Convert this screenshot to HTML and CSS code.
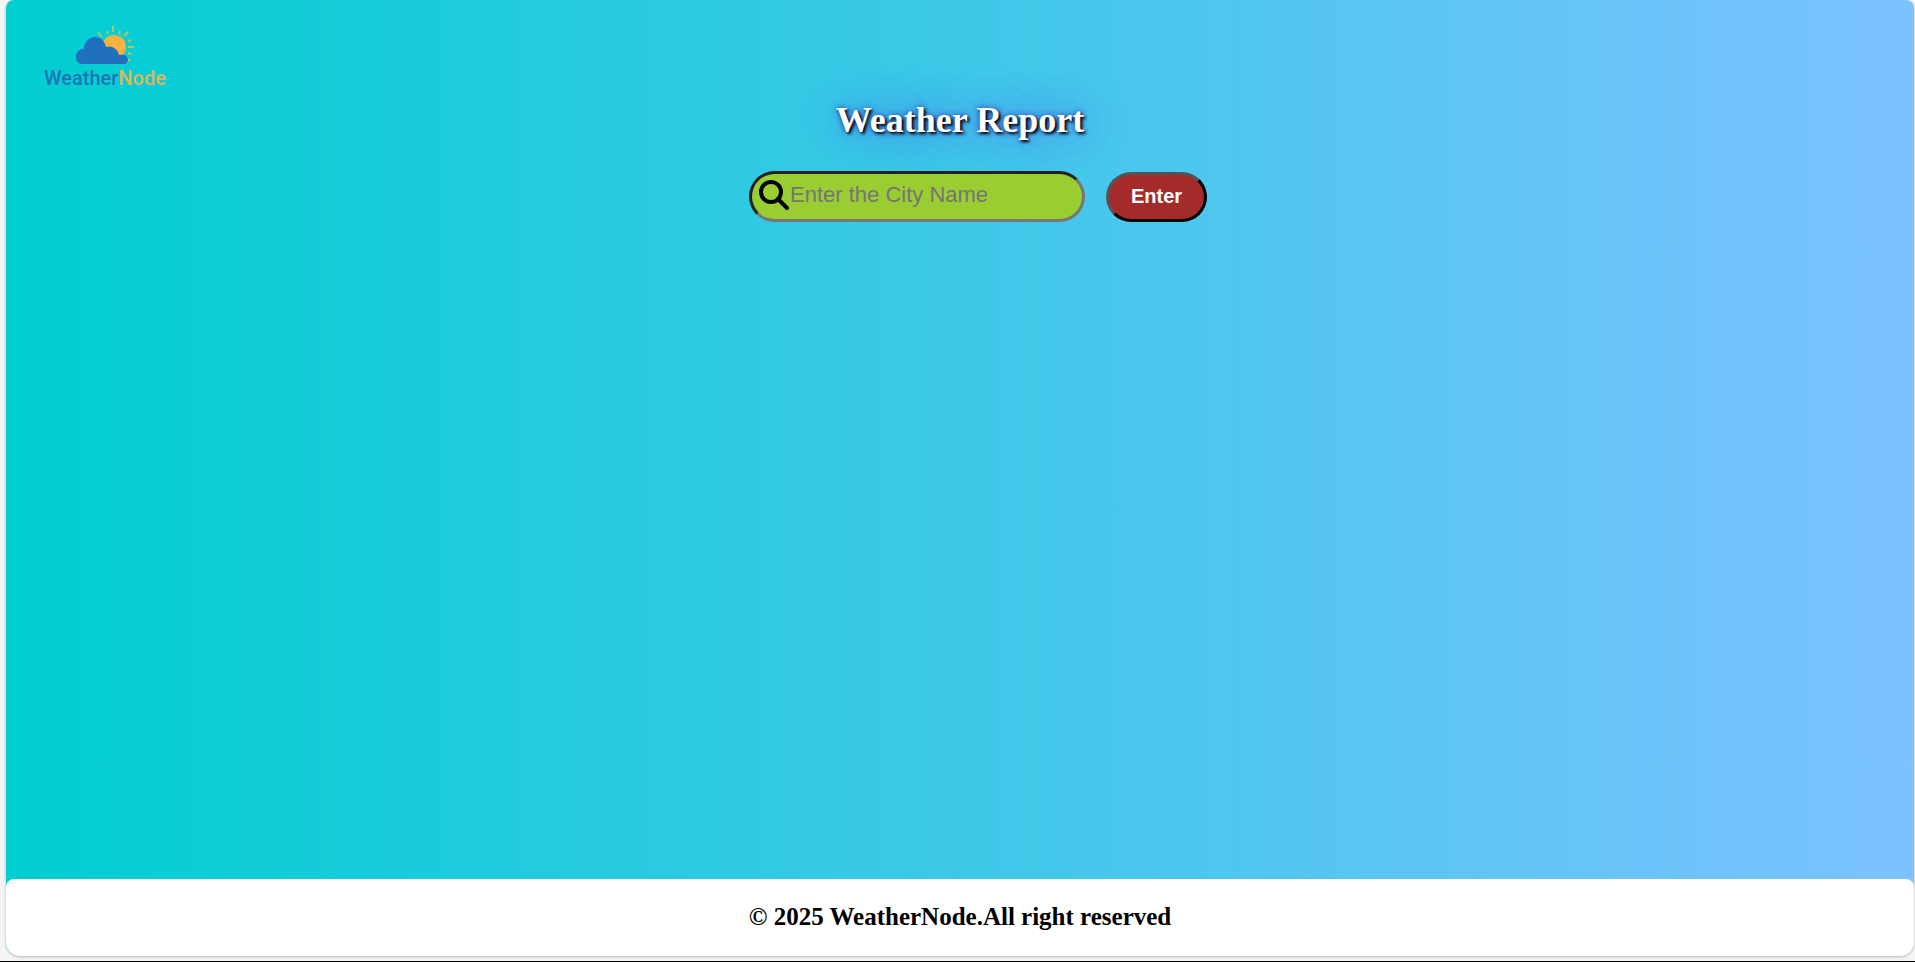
FILE: index.html
```html
<!DOCTYPE html>
<html lang="en">
<head>
<meta charset="utf-8">
<meta name="viewport" content="width=device-width, initial-scale=1">
<title>WeatherNode</title>
<link rel="stylesheet" href="styles.css">
</head>
<body>
<div class="card">
  <header class="header">
    <svg class="logo" viewBox="0 0 140 72" role="img" aria-label="WeatherNode">
      <g class="logo-rays">
        <path d="M58 10l4 5M67 9l1 3M73 4v6M80 9l-1 3M88 10l-4 4M91 18l-3 1M94 25h-6M91 32l-3-1M87 36l3 3"/>
      </g>
      <circle class="logo-sun" cx="74" cy="25" r="12"/>
      <path class="logo-cloud" d="M42 42c-4 0-6-3-6-7 0-5 3-8 8-8 0-7 5-12 11-12 5 0 10 4 11 10 6-2 12 2 13 8 5-1 9 1 9 5 0 2-2 4-4 4z"/>
      <text class="logo-text" x="4" y="63">Weather<tspan class="logo-node">Node</tspan></text>
    </svg>
  </header>
  <main class="main">
    <h1 class="title">Weather Report</h1>
    <form class="search">
      <label class="field">
        <svg class="search-icon" viewBox="0 0 32 32" aria-hidden="true"><circle cx="13" cy="13" r="10"/><path d="M20 20l9 9"/></svg>
        <input class="city" type="text" placeholder="Enter the City Name" aria-label="City name">
      </label>
      <button class="enter" type="button">Enter</button>
    </form>
  </main>
  <footer class="footer">
    <p class="copyright">© 2025 WeatherNode.All right reserved</p>
  </footer>
</div>
</body>
</html>
```
FILE: styles.css
```css
* {
  box-sizing: border-box;
}

body {
  margin: 0;
  min-height: 100vh;
  display: flex;
  padding: 0 1px 5px 6px;
  background: #f5f5f5;
  border-bottom: 1px solid #000;
  font-family: "Liberation Serif", "Times New Roman", serif;
}

.card {
  flex: 1;
  display: flex;
  flex-direction: column;
  border-radius: 8px 8px 14px 14px;
  background: linear-gradient(to right, #00ced1, #7cc2ff);
  box-shadow: 0 1px 3px rgba(0, 0, 0, 0.25);
}

.header {
  padding: 22px 0 0 34px;
}

.logo {
  display: block;
  width: 140px;
  height: 72px;
}

.logo-rays {
  fill: none;
  stroke: #b4c469;
  stroke-width: 2;
}

.logo-sun {
  fill: #fbb040;
}

.logo-cloud {
  fill: #2070bd;
}

.logo-text {
  fill: #1b75b5;
  font: 500 20px Roboto, sans-serif;
}

.logo-node {
  fill: #deb653;
}

.main {
  flex: 1;
  display: flex;
  flex-direction: column;
  align-items: center;
  gap: 30px;
  padding-top: 6px;
}

.title {
  margin: 0;
  color: #fff;
  font-size: 36px;
  line-height: 41px;
  text-shadow: 2px 2px 3px #000, 0 0 40px #5a5aff, 0 0 6px #3030b0;
}

.search {
  display: flex;
  align-items: center;
  gap: 21px;
  padding-left: 36px;
}

.field {
  position: relative;
  display: block;
}

.search-icon {
  position: absolute;
  left: 9px;
  top: 8px;
  width: 32px;
  height: 32px;
  fill: none;
  stroke: #000;
  stroke-width: 4;
  stroke-linecap: round;
}

.city {
  display: block;
  width: 336px;
  height: 51px;
  padding: 0 16px 3px 38px;
  border: 3px inset #767676;
  border-radius: 26px;
  background: #9acd32;
  font: 22px "Liberation Sans", Arial, sans-serif;
}

.city::placeholder {
  color: #757575;
}

.enter {
  width: 101px;
  height: 50px;
  padding: 0;
  border: 3px outset #000;
  border-radius: 25px;
  background: #a52a2a;
  color: #fff;
  font: bold 20px "Liberation Sans", Arial, sans-serif;
}

.footer {
  padding: 24px 16px 25px;
  border-radius: 8px 8px 14px 14px;
  background: #fff;
  text-align: center;
}

.copyright {
  margin: 0;
  font-size: 25px;
  font-weight: bold;
  line-height: 28px;
}
```
